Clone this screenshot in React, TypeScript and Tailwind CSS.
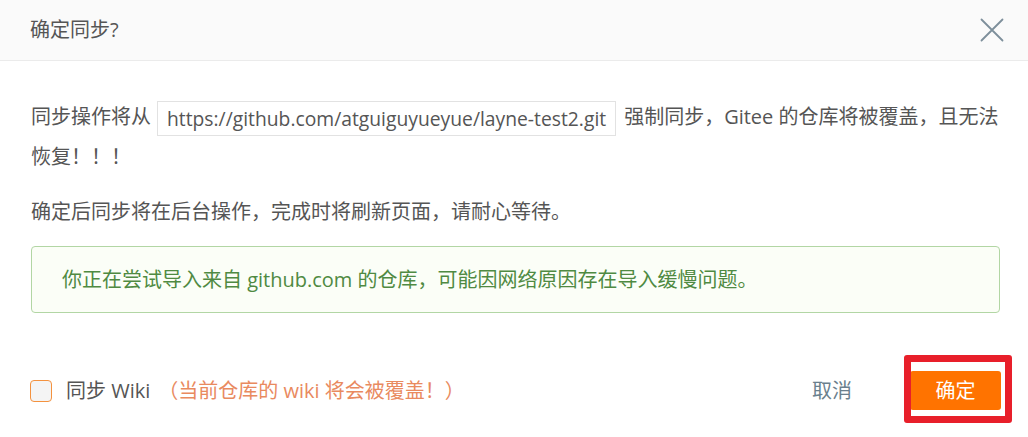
const FONT = "[font-family:'Open_Sans','Noto_Sans_CJK_SC',sans-serif]";

function CloseIcon() {
  return (
    <svg width="24" height="24" viewBox="0 0 24 24" fill="none" stroke="currentColor" strokeWidth="1.8" strokeLinecap="round">
      <path d="M1.5 1.5 L22.5 22.5 M22.5 1.5 L1.5 22.5" />
    </svg>
  );
}

export default function App() {
  return (
    <div className={`relative h-[437px] w-[1028px] overflow-hidden bg-white ${FONT}`}>
      <header className="flex h-[61px] items-center justify-between border-b border-[#ebebeb] bg-[#fafafa] pl-[30px] pr-[24px]">
        <h2 className="text-[20px] text-[#555]">确定同步?</h2>
        <button className="flex h-[24px] w-[24px] items-center justify-center text-[#7d8f9b]">
          <CloseIcon />
        </button>
      </header>

      <div className="pl-[31px] pr-[28px] pt-[36px]">
        <p className="text-[20px] leading-[40px] text-[#555]">
          同步操作将从
          <span className="ml-[6px] mr-[8px] inline-block border border-[#e2e2e2] px-[9px] align-middle text-[19.3px] leading-[33px] text-[#555]">
            https://github.com/atguiguyueyue/layne-test2.git
          </span>
          强制同步，Gitee 的仓库将被覆盖，且无法恢复！！！
        </p>
        <p className="mt-[15px] text-[20px] leading-[40px] text-[#555]">
          确定后同步将在后台操作，完成时将刷新页面，请耐心等待。
        </p>
        <div className="mt-[14px] flex h-[67px] items-center rounded-[4px] border border-[#b2d6a4] bg-[#fbfef7] px-[30px] text-[20px] text-[#4f8a42]">
          你正在尝试导入来自 github.com 的仓库，可能因网络原因存在导入缓慢问题。
        </div>
      </div>

      <footer className="mt-[58px] flex h-[39px] items-center justify-between pl-[30px] pr-[27px]">
        <label className="flex items-center text-[20px]">
          <span className="mr-[14px] h-[22px] w-[22px] rounded-[4px] border-[1.5px] border-[#f4923f] bg-[#f4f4f4]" />
          <span className="text-[#555]">同步 Wiki</span>
          <span className="ml-[8px] text-[#e98a5f]">（当前仓库的 wiki 将会被覆盖！）</span>
        </label>
        <div className="flex items-center gap-[58px]">
          <button className="text-[20px] text-[#6a7f8d]">取消</button>
          <button className="h-[39px] w-[91px] rounded-[3px] bg-[#ff7300] text-[20px] text-white">确定</button>
        </div>
      </footer>

      <div className="pointer-events-none absolute left-[904px] top-[355px] h-[68px] w-[108px] rounded-[3px] border-[7px] border-[#e81f2a]" />
    </div>
  );
}
